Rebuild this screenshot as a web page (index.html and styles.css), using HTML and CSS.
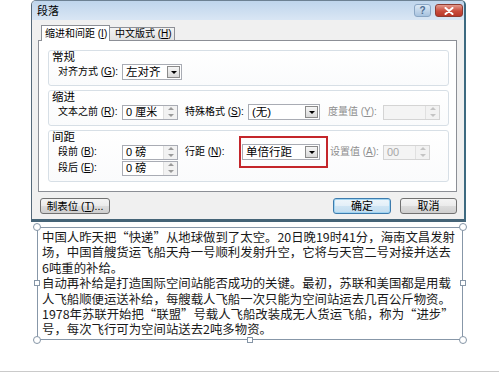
FILE: index.html
```html
<!DOCTYPE html>
<html lang="zh-CN">
<head>
  <meta charset="UTF-8" />
  <meta name="viewport" content="width=device-width, initial-scale=1.0" />
  <title>段落</title>
  <link rel="stylesheet" href="styles.css">
</head>
<body>
  <!-- Paragraph dialog -->
  <div class="dialog">
    <div class="titlebar">
      <span class="title">段落</span>
      <div class="caption-btns">
        <span class="cap-btn help">?</span>
        <span class="cap-btn close">
          <svg width="10" height="8" viewBox="0 0 10 8"><path d="M1.5 1 L8.5 7 M8.5 1 L1.5 7" stroke="#fff" stroke-width="2" stroke-linecap="round"/></svg>
        </span>
      </div>
    </div>

    <div class="client">
      <div class="tabs">
        <div class="tab active">缩进和间距 (<u>I</u>)</div>
        <div class="tab">中文版式 (<u>H</u>)</div>
      </div>

      <div class="panel">
        <div class="group">
          <div class="group-title">常规</div>
          <div class="row">
            <span class="lbl first">对齐方式 (<u>G</u>):</span>
            <div class="combo w60"><span class="val">左对齐</span><span class="drop"></span></div>
          </div>
        </div>

        <div class="group">
          <div class="group-title">缩进</div>
          <div class="row">
            <span class="lbl first">文本之前 (<u>R</u>):</span>
            <div class="spin w56"><span class="val">0 厘米</span><span class="arrows"><i class="up"></i><i class="down"></i></span></div>
            <span class="lbl special">特殊格式 (<u>S</u>):</span>
            <div class="combo w72"><span class="val">(无)</span><span class="drop"></span></div>
            <span class="lbl muted measure">度量值 (<u>Y</u>):</span>
            <div class="spin disabled w57"><span class="val"></span><span class="arrows"><i class="up"></i><i class="down"></i></span></div>
          </div>
        </div>

        <div class="group spacing">
          <div class="group-title">间距</div>
          <div class="row">
            <span class="lbl first">段前 (<u>B</u>):</span>
            <div class="spin w56"><span class="val">0 磅</span><span class="arrows"><i class="up"></i><i class="down"></i></span></div>
            <span class="lbl linesp">行距 (<u>N</u>):</span>
            <div class="combo w78"><span class="val">单倍行距</span><span class="drop"></span></div>
            <span class="lbl muted setval">设置值 (<u>A</u>):</span>
            <div class="spin disabled w47"><span class="val">00</span><span class="arrows"><i class="up"></i><i class="down"></i></span></div>
          </div>
          <div class="row">
            <span class="lbl first">段后 (<u>E</u>):</span>
            <div class="spin w56"><span class="val">0 磅</span><span class="arrows"><i class="up"></i><i class="down"></i></span></div>
          </div>
          <!-- red annotation around the line spacing box -->
          <div class="mark"></div>
        </div>
      </div>

      <div class="buttons">
        <button class="btn tabstop">制表位 (<u>T</u>)...</button>
        <span class="spacer"></span>
        <button class="btn default">确定</button>
        <button class="btn">取消</button>
      </div>
    </div>
  </div>

  <!-- Selected text box on the slide -->
  <div class="textbox">
    <div class="line">中国人昨天把“快递”从地球做到了太空。20日晚19时41分，海南文昌发射</div>
    <div class="line">场，中国首艘货运飞船天舟一号顺利发射升空，它将与天宫二号对接并送去</div>
    <div class="line">6吨重的补给。</div>
    <div class="line">自动再补给是打造国际空间站能否成功的关键。最初，苏联和美国都是用载</div>
    <div class="line">人飞船顺便运送补给，每艘载人飞船一次只能为空间站运去几百公斤物资。</div>
    <div class="line">1978年苏联开始把“联盟”号载人飞船改装成无人货运飞船，称为“进步”</div>
    <div class="line">号，每次飞行可为空间站送去2吨多物资。</div>

    <span class="handle round tl"></span>
    <span class="handle round tr"></span>
    <span class="handle round bl"></span>
    <span class="handle round br"></span>
    <span class="handle square ml"></span>
    <span class="handle square mr"></span>
    <span class="handle square bm"></span>
  </div>

  <div class="rule"></div>
</body>
</html>
```

FILE: styles.css
```css
/* Page */
body {
  margin: 0;
  width: 499px;
  height: 375px;
  overflow: hidden;
  background: #fff;
  font-family: "Liberation Sans", "Noto Sans CJK SC", sans-serif;
  font-size: 11px;
  color: #000;
}
u {
  text-decoration: underline;
}

/* Dialog frame */
.dialog {
  margin-left: 31px;
  width: 435px;
  box-sizing: border-box;
  border-style: solid;
  border-width: 1px 2px 3px 1px;
  border-color: #6d8193 #3d6a80 #456477 #55697a;
  border-radius: 5px 5px 0 0;
  background: #f0f0f0;
}
.titlebar {
  height: 19px;
  display: flex;
  align-items: center;
  justify-content: space-between;
  padding: 0 1px 0 5px;
  background: linear-gradient(#bfd5ec, #d9e6f4);
  border-radius: 4px 4px 0 0;
}
.title {
  font-size: 11px;
  line-height: 14px;
}
.caption-btns {
  display: flex;
  gap: 4px;
  align-items: center;
}
.cap-btn {
  height: 13px;
  box-sizing: border-box;
  display: flex;
  align-items: center;
  justify-content: center;
  border-radius: 3px;
}
.help {
  width: 17px;
  border: 1px solid #8aa6c4;
  background: linear-gradient(#dbe8f5, #a8c3df);
  color: #4d6d92;
  font-size: 10px;
  font-weight: bold;
  line-height: 11px;
}
.close {
  width: 28px;
  border: 1px solid #8e3b31;
  background: linear-gradient(#e29a8e, #c94c3c 55%, #b8382a);
}

/* Client area */
.client {
  padding: 6px 7px 5px 6px;
}
.tabs {
  display: flex;
  align-items: flex-end;
  height: 14px;
  padding-left: 3px;
}
.tab {
  height: 13px;
  box-sizing: border-box;
  border: 1px solid #8c8f96;
  border-bottom: none;
  background: linear-gradient(#f3f3f3, #e2e2e2);
  font-size: 10px;
  line-height: 12px;
  padding-left: 5px;
  white-space: nowrap;
}
.tab.active {
  width: 69px;
  height: 16px;
  margin-bottom: -1px;
  line-height: 15px;
  padding-left: 3px;
  background: #fff;
  position: relative;
  z-index: 1;
}
.tab + .tab {
  width: 66px;
  margin-left: -1px;
}
.panel {
  border: 1px solid #8c8f96;
  background: #fff;
  padding: 9px 7px 9px 9px;
}

/* Group boxes */
.group {
  border: 1px solid #d7dfe6;
  border-radius: 3px;
  background: linear-gradient(#fff, #fafbfc);
  padding: 0 0 5px 3px;
  margin-bottom: 4px;
}
.group:last-child {
  margin-bottom: 0;
}
.group.spacing {
  position: relative;
}
.group-title {
  height: 13px;
  line-height: 13px;
  font-size: 11.5px;
}
.row {
  display: flex;
  align-items: center;
  height: 16px;
  padding-left: 6px;
  white-space: nowrap;
}
.spacing .row:first-of-type {
  margin-top: 2px;
}
.lbl {
  font-size: 10px;
  line-height: 14px;
  flex-shrink: 0;
  min-width: 0;
}
.lbl.first { width: 64px; }
.lbl.special { width: 63px; margin-left: 7px; }
.lbl.measure { width: 55px; margin-left: 8px; }
.lbl.linesp { width: 57px; margin-left: 7px; }
.lbl.setval { width: 53px; margin-left: 10px; }
.lbl.muted { color: #8e8e8e; }

/* Combo boxes */
.combo {
  height: 16px;
  box-sizing: border-box;
  flex-shrink: 0;
  border: 1px solid #a9acb4;
  background: #fff;
  display: flex;
  align-items: center;
}
.combo .val {
  flex: 1;
  padding-left: 3px;
  line-height: 14px;
  font-size: 11.5px;
}
.drop {
  width: 13px;
  height: 12px;
  box-sizing: border-box;
  margin-right: 1px;
  border: 1px solid #8a8a8a;
  background: linear-gradient(#f6f6f6, #d9d9d9);
  display: flex;
  align-items: center;
  justify-content: center;
}
.drop::after {
  content: "";
  border-top: 3px solid #000;
  border-left: 3px solid transparent;
  border-right: 3px solid transparent;
}

/* Spin boxes */
.spin {
  height: 15px;
  box-sizing: border-box;
  flex-shrink: 0;
  border: 1px solid #a9acb4;
  background: #fff;
  display: flex;
}
.spin .val {
  flex: 1;
  padding-left: 3px;
  line-height: 13px;
}
.arrows {
  width: 13px;
  display: flex;
  flex-direction: column;
  background: #f2f2f2;
  border-left: 1px solid #e0e0e0;
}
.arrows i {
  flex: 1;
  display: flex;
  align-items: center;
  justify-content: center;
}
.arrows .up::after {
  content: "";
  border-bottom: 3px solid #9a9a9a;
  border-left: 3px solid transparent;
  border-right: 3px solid transparent;
}
.arrows .down::after {
  content: "";
  border-top: 3px solid #9a9a9a;
  border-left: 3px solid transparent;
  border-right: 3px solid transparent;
}
.spin.disabled {
  border-color: #d4d4d4;
  background: #f4f4f4;
  color: #a8a8a8;
}
.spin.disabled .arrows .up::after { border-bottom-color: #c4c4c4; }
.spin.disabled .arrows .down::after { border-top-color: #c4c4c4; }

.w47 { width: 47px; }
.w56 { width: 56px; }
.w57 { width: 57px; }
.w60 { width: 60px; }
.w72 { width: 72px; }
.w78 { width: 78px; }

/* Red annotation */
.mark {
  position: absolute;
  left: 190px;
  top: 5px;
  width: 89px;
  height: 32px;
  box-sizing: border-box;
  border: 2px solid #c4262b;
}

/* Bottom buttons */
.buttons {
  display: flex;
  margin-top: 6px;
  height: 16px;
}
.spacer {
  flex: 1;
}
.btn {
  height: 16px;
  width: 57px;
  box-sizing: border-box;
  padding: 0;
  margin-left: 9px;
  border: 1px solid #717171;
  border-radius: 3px;
  background: linear-gradient(#f4f4f4 0%, #ebebeb 48%, #dcdcdc 52%, #cfcfcf 100%);
  font-family: inherit;
  font-size: 11px;
  line-height: 14px;
  color: #000;
}
.btn.tabstop {
  width: 70px;
  margin-left: 2px;
  font-size: 10.5px;
}
.btn.default {
  width: 58px;
  border-color: #3d7bad;
  box-shadow: inset 0 0 0 1px #9fd4f2;
  background: linear-gradient(#eef6fb 0%, #e3eff8 48%, #cfe5f4 52%, #c2dcef 100%);
}

/* Text box */
.textbox {
  position: relative;
  margin: 5px 0 0 37px;
  width: 426px;
  height: 113px;
  box-sizing: border-box;
  border: 1px solid #8797a8;
  padding: 2px 0 0 4px;
  font-family: "Noto Sans CJK SC", sans-serif;
  font-size: 12.4px;
  line-height: 15.4px;
  color: #1a1a1a;
}
.line {
  height: 15.4px;
  white-space: nowrap;
}
.handle {
  position: absolute;
  box-sizing: border-box;
  background: #fff;
  border: 1px solid #8595a6;
}
.handle.round {
  width: 8px;
  height: 8px;
  border-radius: 50%;
}
.handle.square {
  width: 6px;
  height: 6px;
}
.tl { left: -5px; top: -5px; }
.tr { right: -5px; top: -5px; }
.bl { left: -5px; bottom: -5px; }
.br { right: -5px; bottom: -5px; }
.ml { left: -4px; top: 52px; }
.mr { right: -4px; top: 52px; }
.bm { left: 209px; bottom: -4px; }

/* Thin rule at the bottom of the page */
.rule {
  margin-top: 31px;
  height: 1px;
  background: #cacaca;
}
```
